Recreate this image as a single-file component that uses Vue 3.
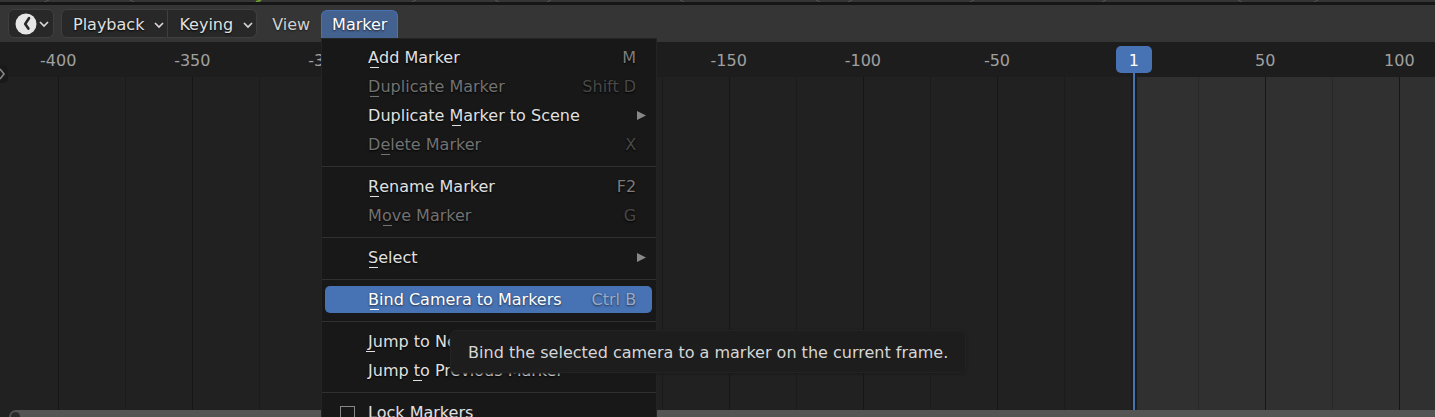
<template>
  <div class="tl">
    <div class="tl-edge">
      <svg class="tl-edge-art" width="1435" height="2" viewBox="0 0 1435 2">
        <path d="M44 2l5-2M130 0l4 2M412 2l4-2M495 0l4 2M547 2l4-2M680 0l4 2M816 0l4 2M848 2l4-2M970 2l4-2M1102 2l4-2M1238 0l4 2M1314 2l4-2" stroke="#555" />
        <path d="M256 2l5-2" stroke="#6d9a2c" stroke-width="2" />
      </svg>
    </div>

    <!-- Header -->
    <header class="tl-header">
      <button class="tl-btn tl-editor" aria-label="Timeline">
        <svg width="22" height="22" viewBox="0 0 22 22">
          <circle cx="11" cy="11" r="10.5" fill="#e6e6e6" />
          <path d="M14 5.2L10.2 11l3.2 4.6" fill="none" stroke="#282828" stroke-width="2.6" stroke-linecap="round" stroke-linejoin="round" />
        </svg>
        <svg class="tl-chev" width="10" height="8" viewBox="0 0 10 8"><path d="M1 2l4 4 4-4" /></svg>
      </button>

      <div class="tl-group">
        <button v-for="name in dropdowns" :key="name" class="tl-btn tl-drop">
          {{ name }}
          <svg class="tl-chev" width="10" height="8" viewBox="0 0 10 8"><path d="M1 2l4 4 4-4" /></svg>
        </button>
      </div>

      <button class="tl-menu-btn">View</button>
      <div class="tl-menu-anchor">
        <button class="tl-menu-btn open" aria-haspopup="menu" aria-expanded="true">Marker</button>
        <div class="mn">
          <div v-for="(group, i) in menu" :key="i" class="mn-group">
            <button
              v-for="item in group" :key="item.label"
              class="mn-item"
              :class="{ active: item.active }"
              :disabled="item.disabled"
            >
              <span class="mn-label">{{ item.label.slice(0, item.key) }}<span class="mn-key">{{ item.label[item.key] }}</span>{{ item.label.slice(item.key + 1) }}</span>
              <svg v-if="item.sub" class="mn-arrow" width="10" height="11" viewBox="0 0 10 11"><path d="M1 0l9 4.5L1 9z" /></svg>
              <span v-else class="mn-short">{{ item.short }}</span>
            </button>
          </div>
          <div class="mn-group">
            <label class="mn-check" for="lock"><input id="lock" v-model="locked" type="checkbox">Lock Markers</label>
          </div>
          <div class="mn-tip" role="tooltip">Bind the selected camera to a marker on the current frame.</div>
        </div>
      </div>
    </header>

    <!-- Ruler -->
    <div class="tl-ruler">
      <span v-for="f in labels" :key="f" class="tl-num" :style="{ left: pos(f) }">{{ f }}</span>
      <span class="tl-num tl-current" :style="{ left: pos(current) }">{{ current }}</span>
      <span class="tl-stem" :style="{ left: pos(current) }"></span>
    </div>

    <!-- Frame grid -->
    <div class="tl-grid">
      <div class="tl-range" :style="{ left: pos(current) }"></div>
      <i v-for="f in lines" :key="f" class="tl-line" :class="{ major: f % 50 === 0 }" :style="{ left: pos(f) }"></i>
      <div class="tl-head" :style="{ left: pos(current) }"></div>
    </div>

    <div class="tl-scroll"><span class="tl-handle"></span></div>

    <button class="tl-expand" aria-label="Show panel">
      <svg width="6" height="12" viewBox="0 0 6 12"><path d="M0 1l4 5-4 5" /></svg>
    </button>
  </div>
</template>

<script setup>
import { ref } from 'vue';

const viewStart = -421.7;
const viewLength = 535;
const current = 1;
const locked = ref(false);

const dropdowns = ['Playback', 'Keying'];

// key: index of the underlined access letter
const menu = [
  [
    { label: 'Add Marker', key: 0, short: 'M' },
    { label: 'Duplicate Marker', key: 0, short: 'Shift D', disabled: true },
    { label: 'Duplicate Marker to Scene', key: 10, sub: true },
    { label: 'Delete Marker', key: 1, short: 'X', disabled: true },
  ],
  [
    { label: 'Rename Marker', key: 0, short: 'F2' },
    { label: 'Move Marker', key: 1, short: 'G', disabled: true },
  ],
  [{ label: 'Select', key: 0, sub: true }],
  [{ label: 'Bind Camera to Markers', key: 0, short: 'Ctrl B', active: true }],
  [
    { label: 'Jump to Next Marker', key: 0 },
    { label: 'Jump to Previous Marker', key: 5 },
  ],
];

// frames left of the open menu and right of it
const labels = [-400, -350, -300, -150, -100, -50, 50, 100];

const lines = [];
for (let f = -400; f <= 100; f += 25) {
  if (f !== 0) lines.push(f);
}

function pos(frame) {
  return ((frame - viewStart) / viewLength) * 100 + '%';
}
</script>

<style>
body { margin: 0; background: #212121; }
</style>

<style scoped>
.tl {
  position: relative; display: flex; flex-direction: column;
  height: 100vh; overflow: hidden; background: #212121;
  font: 16px/20px "DejaVu Sans", sans-serif; color: #e0e0e0;
}
button {
  font: inherit; color: inherit; margin: 0; padding: 0;
  border: 0; background: none; white-space: nowrap;
}

.tl-edge {
  height: 2px; flex-shrink: 0; overflow: hidden;
  background: #353535; border-bottom: 3px solid #161616;
}
.tl-edge-art { display: block; }

/* Header */
.tl-header {
  display: flex; align-items: center; height: 37px; flex-shrink: 0;
  box-sizing: border-box; padding-left: 8px; background: #353535;
}
.tl-btn {
  display: flex; align-items: center; height: 29px; box-sizing: border-box;
  background: #282828; border: 1px solid #3f3f3f;
  text-shadow: 0 1px 2px #000;
}
.tl-editor { width: 46px; padding-left: 6px; gap: 2px; border-radius: 6px; }
.tl-chev { flex-shrink: 0; }
.tl-chev path { fill: none; stroke: #d8d8d8; stroke-width: 1.7; }
.tl-group { display: flex; margin-left: 7px; }
.tl-drop { padding: 2px 3px 0 11px; gap: 10px; }
.tl-drop:first-child { border-radius: 6px 0 0 6px; }
.tl-drop:last-child { border-radius: 0 6px 6px 0; border-left: 0; }
.tl-menu-btn {
  display: block; height: 28px; padding: 2px 11px 0; color: #d0d0d0;
  text-shadow: 0 1px 2px #1a1a1a;
}
.tl-group + .tl-menu-btn { margin-left: 4px; }
.tl-menu-anchor { position: relative; }
.tl-menu-btn.open {
  box-sizing: border-box; padding: 1px 10px 0; color: #fff;
  background: #446290; border: 1px solid #4772b3; border-bottom: 0;
  border-radius: 6px 6px 0 0;
}

/* Menu */
.mn {
  position: absolute; top: 28px; left: 0; z-index: 2;
  width: 336px; box-sizing: border-box; padding-top: 4px;
  background: #181818; border: 1px solid #242424;
}
.mn-group { display: flex; flex-direction: column; }
.mn-group + .mn-group { margin-top: 7px; padding-top: 5px; border-top: 1px solid #303030; }
.mn-item {
  display: flex; align-items: center; justify-content: space-between;
  height: 27px; margin: 1px 4px 1px 3px;
  padding: 2px 16px 0 43px; border-radius: 5px; text-shadow: 0 1px 2px #000;
}
.mn-item:disabled { color: #727272; }
.mn-item.active { background: #4772b3; color: #fff; text-shadow: 0 1px 2px #234; }
.mn-short { color: #7c7c7c; }
.mn-item:disabled .mn-short { color: #484848; }
.mn-item.active .mn-short { color: #98a9c8; }
.mn-arrow { margin-right: -10px; fill: #888; }
.mn-key { position: relative; }
.mn-key::after {
  content: ""; position: absolute; left: calc(50% - 4px); bottom: -1px;
  width: 9px; height: 1px; background: currentColor;
}
.mn-check { display: flex; align-items: center; height: 29px; padding: 1px 0 0 18px; gap: 13px; }
.mn-check input {
  appearance: none; width: 15px; height: 15px; margin: 0;
  border: 1px solid #888; background: #181818;
}
.mn-tip {
  position: absolute; top: 291px; left: 128px; z-index: 3;
  padding: 12px 17px 9px; white-space: nowrap; color: #d6d6d6;
  background: #1d1d1d; border: 1px solid #232323; border-radius: 6px;
  box-shadow: 0 1px 3px #1a1a1a;
}

/* Ruler */
.tl-ruler { position: relative; height: 35px; flex-shrink: 0; background: #1d1d1d; }
.tl-num { position: absolute; top: 9px; transform: translateX(-50%); color: #a0a0a0; }
.tl-current {
  top: 4px; z-index: 1; width: 36px; height: 27px; line-height: 29px; text-align: center;
  color: #fff; background: #4772b3; border-radius: 5px;
}
.tl-stem { position: absolute; top: 4px; bottom: 0; width: 2px; margin-left: -1px; background: #4772b3; }

/* Grid */
.tl-grid { position: relative; flex: 1; overflow: hidden; }
.tl-range { position: absolute; top: 0; bottom: 0; right: 0; background: #303030; }
.tl-line { position: absolute; top: 0; bottom: 0; width: 1px; background: rgba(0, 0, 0, .16); }
.tl-line.major { background: #161616; }
.tl-head {
  position: absolute; top: 0; bottom: 0; width: 2px; margin-left: -1px;
  background: #4772b3; box-shadow: 0 0 0 2px #1b1b1b;
}

.tl-scroll {
  height: 7px; flex-shrink: 0; margin-left: 9px; padding-left: 2px; overflow: hidden;
  box-sizing: border-box; background: #545454; border-radius: 7px 0 0 0;
}
.tl-handle { display: block; width: 9px; height: 9px; margin-top: 2px; border-radius: 50%; background: #2a2a2a; }

.tl-expand {
  position: absolute; top: 65px; left: 0; width: 8px; height: 18px;
  background: #191919; border-radius: 0 5px 5px 0; display: flex; align-items: center;
}
.tl-expand path { fill: none; stroke: #888; stroke-width: 1.6; }
</style>
